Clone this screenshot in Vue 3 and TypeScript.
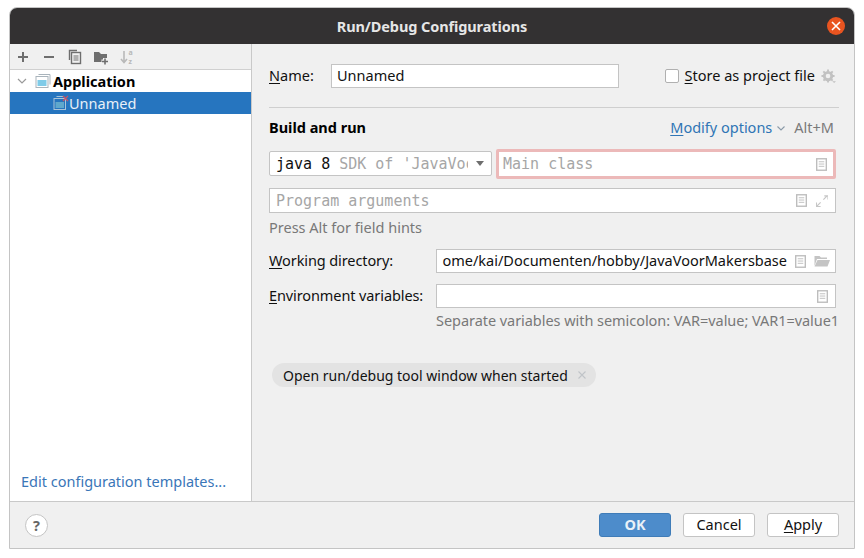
<script setup lang="ts">
const tools = ['plus', 'minus', 'copy', 'folder', 'sort']
</script>

<template>
  <div class="window">
    <header class="titlebar">
      <span class="title">Run/Debug Configurations</span>
      <span class="close">
        <svg width="10" height="10" viewBox="0 0 10 10"><path d="M1 1l8 8M9 1l-8 8" stroke="#fff" stroke-width="1.6" /></svg>
      </span>
    </header>
    <div class="body">
      <aside class="sidebar">
        <div class="toolbar">
          <svg v-for="t in tools" :key="t" class="tool" width="16" height="16" viewBox="0 0 16 16">
            <path v-if="t === 'plus'" d="M8 3v10M3 8h10" stroke="#6e6e6e" stroke-width="2" fill="none" />
            <path v-else-if="t === 'minus'" d="M3 8h10" stroke="#6e6e6e" stroke-width="2" fill="none" />
            <g v-else-if="t === 'copy'" fill="none" stroke="#6e6e6e">
              <path d="M2.500 11V1.500H10" stroke-width="1.400" />
              <rect x="4.500" y="3.500" width="9" height="11" fill="#f0f0f0" stroke-width="1.400" />
              <path d="M6.500 7h5M6.500 9h5M6.500 11h5" stroke-width="1.200" />
            </g>
            <g v-else-if="t === 'folder'">
              <path d="M1 3h5l2 2h6v8H1z" fill="#6e6e6e" />
              <path d="M12 9v7M8.500 12.500h7" stroke="#f0f0f0" stroke-width="4" />
              <path d="M12 9.500v6M9 12.500h6" stroke="#6e6e6e" stroke-width="1.600" />
            </g>
            <g v-else>
              <path d="M5 2v11M2 10l3 3.500 3-3.500" stroke="#b9b9b9" stroke-width="1.600" fill="none" />
              <text x="9.500" y="6" class="sort-letter">a</text>
              <text x="9.500" y="14.500" class="sort-letter">z</text>
            </g>
          </svg>
        </div>
        <div class="tree">
          <div class="node parent">
            <svg class="chevron" width="10" height="6" viewBox="0 0 10 6"><path d="M1 1l4 4 4-4" stroke="#9a9a9a" stroke-width="1.200" fill="none" /></svg>
            <svg width="16" height="16" viewBox="0 0 16 16">
              <path d="M3.500 1.500h11.500v10" stroke="#a9b4bc" fill="none" />
              <rect x="1" y="3.500" width="12" height="11" fill="#fff" stroke="#a9b4bc" />
              <rect x="2.500" y="7" width="9" height="6" fill="#7fcbe8" />
            </svg>
            <span>Application</span>
          </div>
          <div class="node child">
            <svg width="16" height="16" viewBox="0 0 16 16">
              <path d="M3.500 1.500h7" stroke="#a9c4d8" fill="none" />
              <rect x="1" y="3.500" width="11.500" height="11" fill="none" stroke="#a9c4d8" />
              <rect x="2.500" y="7" width="8.500" height="6" fill="#5fa8cc" />
              <path d="M10 1l5 5M15 1l-5 5" stroke="#c4566a" stroke-width="1.300" />
            </svg>
            <span>Unnamed</span>
          </div>
        </div>
        <a class="templates">Edit configuration templates...</a>
      </aside>

      <main class="panel">
        <div class="row name-row">
          <label class="name-label"><u>N</u>ame:</label>
          <div class="input name-input">Unnamed</div>
          <span class="checkbox"></span>
          <span class="store"><u>S</u>tore as project file</span>
          <svg class="gear" width="15" height="15" viewBox="0 0 16 16">
            <circle cx="7.500" cy="7.500" r="4" fill="none" stroke="#c2c2c2" stroke-width="3" />
            <path d="M7.500 0.500v14M0.500 7.500h14M2.500 2.500l10 10M12.500 2.500l-10 10" stroke="#c2c2c2" stroke-width="2" stroke-dasharray="2.500 9" />
            <path d="M12 13h4l-2 2z" fill="#c2c2c2" />
          </svg>
        </div>
        <div class="separator"></div>
        <div class="row build-row">
          <strong class="section">Build and run</strong>
          <span class="modify"><u>M</u>odify options</span>
          <svg class="mod-chev" width="8" height="5" viewBox="0 0 8 5"><path d="M0.500 0.500L4 4l3.500-3.500" stroke="#8a9aa8" stroke-width="1.100" fill="none" /></svg>
          <span class="shortcut">Alt+M</span>
        </div>
        <div class="row sdk-row">
          <div class="select mono">
            <span class="sdk-text"><span class="dark">java 8</span> SDK of 'JavaVoo</span>
            <svg width="8" height="5" viewBox="0 0 8 5"><path d="M0 0h8L4 5z" fill="#6e6e6e" /></svg>
          </div>
          <div class="input main-class mono">
            <span class="grow">Main class</span>
            <svg class="doc" width="11" height="13" viewBox="0 0 12 14"><rect x="0.750" y="0.750" width="10.500" height="12.500" fill="none" stroke="#bdbdbd" stroke-width="1.500" /><path d="M3 4h6M3 6.500h6M3 9h6" stroke="#bdbdbd" /></svg>
          </div>
        </div>
        <div class="input args mono">
          <span class="grow">Program arguments</span>
          <svg class="doc" width="11" height="13" viewBox="0 0 12 14"><rect x="0.750" y="0.750" width="10.500" height="12.500" fill="none" stroke="#bdbdbd" stroke-width="1.500" /><path d="M3 4h6M3 6.500h6M3 9h6" stroke="#bdbdbd" /></svg>
          <svg class="expand" width="12" height="12" viewBox="0 0 13 13"><path d="M8 5l4-4M9 1h4v4M5 8l-4 4M0.500 8v4.500H5" stroke="#c6c6c6" stroke-width="1.300" fill="none" /></svg>
        </div>
        <div class="hint press">Press Alt for field hints</div>
        <div class="row field-row wd">
          <label class="field-label"><u>W</u>orking directory:</label>
          <div class="input field">
            <span class="grow clip">ome/kai/Documenten/hobby/JavaVoorMakersbase</span>
            <svg class="doc" width="11" height="13" viewBox="0 0 12 14"><rect x="0.750" y="0.750" width="10.500" height="12.500" fill="none" stroke="#bdbdbd" stroke-width="1.500" /><path d="M3 4h6M3 6.500h6M3 9h6" stroke="#bdbdbd" /></svg>
            <svg class="folder" width="16" height="12" viewBox="0 0 16 12"><path d="M0.500 11V1h5l1.500 1.500h6V4H3z" fill="#c4c4c4" /><path d="M3.500 5H16l-2.500 6.500H0.500z" fill="#c4c4c4" /></svg>
          </div>
        </div>
        <div class="row field-row env">
          <label class="field-label"><u>E</u>nvironment variables:</label>
          <div class="input field env-field">
            <span class="grow"></span>
            <svg class="doc" width="11" height="13" viewBox="0 0 12 14"><rect x="0.750" y="0.750" width="10.500" height="12.500" fill="none" stroke="#bdbdbd" stroke-width="1.500" /><path d="M3 4h6M3 6.500h6M3 9h6" stroke="#bdbdbd" /></svg>
          </div>
        </div>
        <div class="hint sep-hint">Separate variables with semicolon: VAR=value; VAR1=value1</div>
        <div class="chip">
          <span>Open run/debug tool window when started</span>
          <svg width="8" height="8" viewBox="0 0 8 8"><path d="M0.500 0.500l7 7M7.500 0.500l-7 7" stroke="#c0c4c8" stroke-width="1.100" /></svg>
        </div>
      </main>
    </div>
    <footer class="footer">
      <span class="help">?</span>
      <span class="spacer"></span>
      <button class="btn primary">OK</button>
      <button class="btn">Cancel</button>
      <button class="btn"><u>A</u>pply</button>
    </footer>
  </div>
</template>

<style scoped>
.window {
  box-sizing: border-box;
  width: 846px;
  height: 542px;
  margin: 7px 0 0 9px;
  border: 1px solid #c4c4c4;
  border-radius: 8px 8px 0 0;
  background: #f0f0f0;
  display: flex;
  flex-direction: column;
  overflow: hidden;
  font-family: "Noto Sans", sans-serif;
  font-size: 14.500px;
  color: #111;
}
u { text-underline-offset: 2px; }
.titlebar {
  height: 36px;
  flex: none;
  background: #333132;
  display: flex;
  align-items: center;
  justify-content: center;
  position: relative;
}
.title { color: #e6e6e6; font-weight: 700; letter-spacing: -0.100px; }
.close {
  position: absolute;
  right: 9px;
  top: 9px;
  width: 18px;
  height: 18px;
  border-radius: 50%;
  background: #e95420;
  display: flex;
  align-items: center;
  justify-content: center;
}
.body { flex: 1; display: flex; min-height: 0; border-bottom: 1px solid #c9c9c9; }
.sidebar {
  width: 242px;
  flex: none;
  box-sizing: border-box;
  background: #fff;
  border-right: 1px solid #c9c9c9;
  display: flex;
  flex-direction: column;
}
.toolbar {
  height: 26px;
  box-sizing: border-box;
  background: #f0f0f0;
  border-bottom: 1px solid #d0d0d0;
  display: flex;
  align-items: center;
  gap: 10px;
  padding: 0 0 0 5px;
}
.tool { overflow: visible; }
.tree { flex: 1; }
.node { height: 22px; display: flex; align-items: center; padding-bottom: 1px; box-sizing: border-box; }
.parent { font-weight: 700; padding-left: 7px; color: #000; }
.chevron { margin-right: 8px; }
.parent span { margin-left: 2px; }
.child { background: #2675bf; color: #e8f0f8; padding-left: 43px; }
.sort-letter { font-size: 7px; font-weight: 700; fill: #b9b9b9; font-family: "Noto Sans", sans-serif; }
.templates { color: #3a76b8; padding: 0 0 10px 11px; }
.panel { flex: 1; padding: 20px 18px 0 17px; min-width: 0; }
.row { display: flex; align-items: center; }
.name-row { height: 24px; }
.name-row > label, .store { margin-bottom: 2px; }
.name-label { width: 62px; flex: none; }
.input {
  box-sizing: border-box;
  background: #fff;
  border: 1px solid #c4c4c4;
  display: flex;
  align-items: center;
}
.name-input { width: 288px; height: 24px; padding: 0 0 2px 5px; }
.checkbox {
  box-sizing: border-box;
  width: 14px;
  height: 14px;
  margin-left: 46px;
  background: #fff;
  border: 1px solid #b0b0b0;
  border-radius: 2px;
}
.store { margin-left: 6px; white-space: nowrap; }
.gear { margin-left: 6px; }
.separator { height: 1px; background: #cfcfcf; margin: 19px -3px 0 0; }
.build-row { margin-top: 10px; height: 20px; box-sizing: border-box; padding-bottom: 2px; }
.section { font-weight: 700; color: #000; flex: 1; }
.modify { color: #2f75b5; }
.mod-chev { margin: 2px 0 0 5px; }
.shortcut { color: #7a7a7a; margin: 0 2px 0 9px; }
.sdk-row { margin-top: 11px; height: 30px; gap: 4px; align-items: flex-start; }
.mono { font-family: "DejaVu Sans Mono", monospace; font-size: 15px; color: #a6a6a6; }
.select {
  box-sizing: border-box;
  width: 223px;
  height: 25px;
  margin-top: 2px;
  background: #fff;
  border: 1px solid #c4c4c4;
  border-radius: 2px;
  display: flex;
  align-items: center;
  padding: 0 7px 0 6px;
}
.sdk-text { flex: 1; overflow: hidden; white-space: nowrap; min-width: 0; margin-right: 8px; }
.dark { color: #111; }
.main-class {
  flex: 1;
  height: 30px;
  border: 3px solid #ecb9b9;
  border-radius: 2px;
  padding: 0 6px 0 4px;
}
.grow { flex: 1; min-width: 0; }
.args { height: 25px; margin-top: 9px; padding: 0 7px 0 6px; }
.expand { margin-left: 9px; }
.hint { color: #787878; }
.press { margin-top: 5px; height: 18px; line-height: 18px; }
.field-row { height: 24px; }
.field-row > label { margin-bottom: 2px; }
.wd { margin-top: 13px; }
.env { margin-top: 11px; }
.field-label { width: 167px; flex: none; white-space: nowrap; letter-spacing: -0.100px; }
.field { flex: 1; height: 24px; min-width: 0; padding: 0 5px 0 0; }
.env-field { padding-right: 7px; }
.clip { white-space: nowrap; text-align: right; height: 20px; line-height: 20px; margin: 0 8px 2px 0; }
.folder { margin-left: 8px; }
.sep-hint { margin: 3px -4px 0 167px; height: 18px; line-height: 18px; white-space: nowrap; letter-spacing: -0.050px; }
.chip {
  margin: 34px 0 0 3px;
  width: 324px;
  height: 24px;
  box-sizing: border-box;
  background: #e3e3e3;
  border-radius: 12px;
  display: flex;
  align-items: center;
  justify-content: space-between;
  padding: 0 10px 0 11px;
  font-size: 14px;
}
.footer {
  height: 46px;
  flex: none;
  display: flex;
  align-items: center;
  padding: 0 15px 0 15px;
  gap: 12px;
}
.spacer { flex: 1; }
.help {
  box-sizing: border-box;
  width: 23px;
  height: 23px;
  border: 1px solid #c4c4c4;
  border-radius: 50%;
  background: #fff;
  color: #666;
  font-weight: 700;
  text-align: center;
  line-height: 20px;
}
.btn {
  box-sizing: border-box;
  width: 72px;
  height: 24px;
  padding: 0 0 2px;
  border: 1px solid #c4c4c4;
  border-radius: 3px;
  background: #fff;
  color: #111;
  font: inherit;
}
.primary { background: #4d8ccb; border-color: #3f7cb8; color: #e9f1f8; font-weight: 700; }
</style>
